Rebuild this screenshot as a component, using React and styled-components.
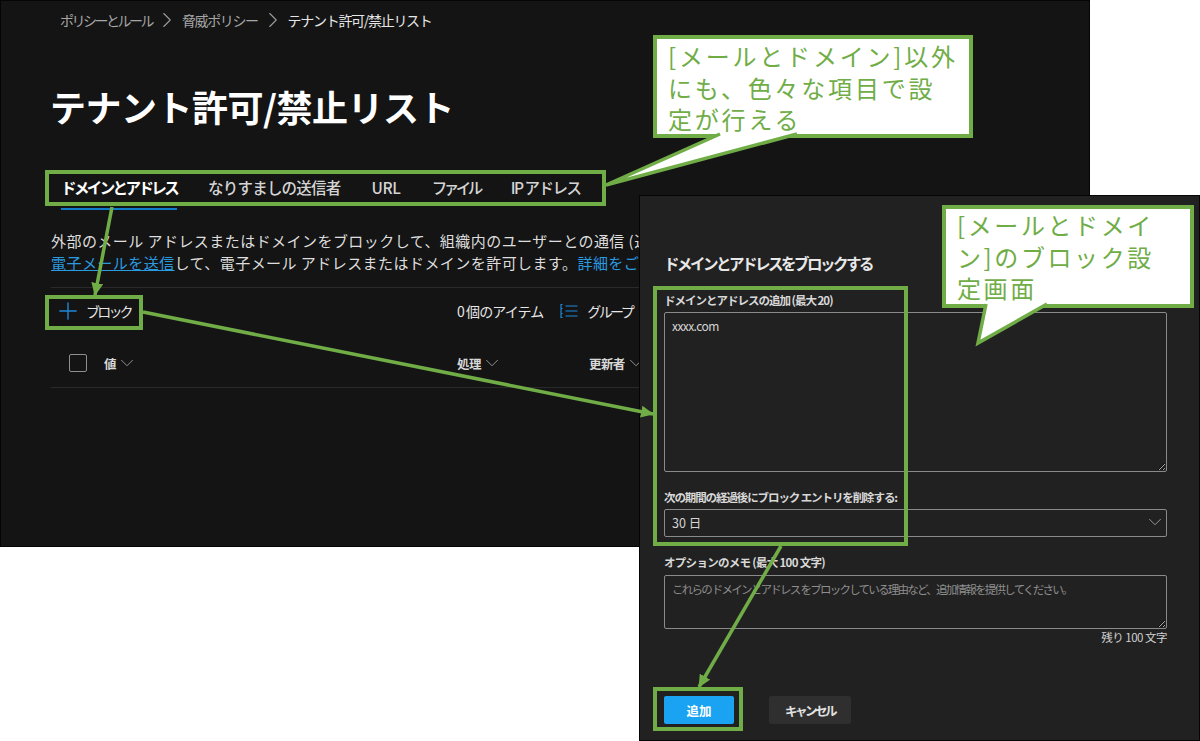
import styled, { createGlobalStyle } from "styled-components";
import { ChevronDown, ChevronRight, Plus } from "lucide-react";

const FONT = `"Noto Sans CJK JP", "Noto Sans", sans-serif`;
const GREEN = "#70ad47";

const GlobalStyle = createGlobalStyle`
  html, body {
    margin: 0;
    background: #fff;
    font-family: ${FONT};
  }
  * { box-sizing: border-box; }
`;

const Canvas = styled.div`
  position: relative;
  width: 1200px;
  height: 741px;
  overflow: hidden;
  background: #fff;
`;

/* ---- main window ---- */
const MainWindow = styled.div`
  position: absolute;
  left: 0;
  top: 0;
  width: 1090px;
  height: 547px;
  padding: 0 0 0 50px;
  background: #141414;
  border: 1px solid #050505;
  overflow: hidden;
  color: #fff;
`;

const Breadcrumb = styled.nav`
  display: flex;
  align-items: center;
  height: 20px;
  margin: 9px 0 0 9px;
  font-size: 14px;
  line-height: 20px;
  svg {
    margin: 0 2px;
    color: #9a9a9a;
  }
`;

const Crumb = styled.span`
  letter-spacing: ${(p) => p.$spacing}px;
  color: ${(p) => (p.$current ? "#e6e6e6" : "#a6a6a6")};
`;

const Title = styled.h1`
  margin: 51px 0 0 -1px;
  font-size: 36px;
  line-height: 50px;
  font-weight: 700;
  letter-spacing: -0.5px;
  white-space: nowrap;
`;

const Tabs = styled.div`
  display: flex;
  gap: 31px;
  margin: 38px 0 0 10px;
  height: 44px;
`;

const Tab = styled.div`
  height: 41px;
  padding-top: 6px;
  font-size: 15.5px;
  line-height: 24px;
  letter-spacing: ${(p) => p.$spacing}px;
  font-weight: ${(p) => (p.$active ? 700 : 500)};
  color: ${(p) => (p.$active ? "#fff" : "#d4d4d4")};
  border-bottom: 2px solid ${(p) => (p.$active ? "#0f7dcb" : "transparent")};
  white-space: nowrap;
`;

const Description = styled.div`
  width: 1020px;
  margin-top: 17px;
  font-size: 15px;
  line-height: 22px;
  letter-spacing: 0.45px;
  color: #dedede;
  white-space: nowrap;
`;

const LinkText = styled.a`
  color: #2b9be0;
  text-decoration: ${(p) => (p.$plain ? "none" : "underline")};
`;

const Toolbar = styled.div`
  display: flex;
  align-items: center;
  width: 1020px;
  height: 46px;
  margin-top: 13px;
  padding-left: 3px;
  border-top: 1px solid #2a2a2a;
  font-size: 14px;
  color: #e6e6e6;
`;

const BlockButton = styled.div`
  display: flex;
  align-items: center;
  gap: 4px;
  width: 403px;
  letter-spacing: -2.8px;
  svg {
    color: #1e88d8;
  }
`;

const ItemCount = styled.span`
  margin-right: 17px;
  letter-spacing: -0.9px;
`;

const GroupButton = styled.div`
  display: flex;
  align-items: center;
  gap: 9px;
  letter-spacing: -2.6px;
`;

const HeaderRow = styled.div`
  display: flex;
  align-items: center;
  width: 1020px;
  height: 53px;
  margin-top: 2px;
  padding: 4px 0 0 18px;
  border-bottom: 1px solid #2a2a2a;
  font-size: 12.5px;
  font-weight: 700;
  color: #d8d8d8;
`;

const Checkbox = styled.span`
  width: 18px;
  height: 18px;
  margin-right: 17px;
  border: 1px solid #8f8f8f;
  border-radius: 2px;
`;

const ColumnHead = styled.div`
  display: flex;
  align-items: center;
  gap: 0;
  width: ${(p) => p.$w}px;
  letter-spacing: -0.6px;
  svg {
    color: #9a9a9a;
  }
`;

/* ---- flyout ---- */
const Flyout = styled.div`
  position: absolute;
  left: 639px;
  top: 195px;
  width: 561px;
  height: 546px;
  display: flex;
  flex-direction: column;
  padding: 55px 32px 0 24px;
  background: #212121;
  border: 1px solid #050505;
  color: #e8e8e8;
`;

const FlyoutTitle = styled.h2`
  margin: 0 0 17px;
  font-size: 15.5px;
  line-height: 24px;
  font-weight: 700;
  letter-spacing: -2.5px;
`;

const FieldLabel = styled.label`
  display: block;
  font-size: 11.5px;
  line-height: 16px;
  font-weight: 700;
  letter-spacing: ${(p) => p.$spacing}px;
  color: #d8d8d8;
  margin: ${(p) => p.$mt || 0}px 0 ${(p) => p.$mb || 4}px;
`;

const TextArea = styled.textarea`
  display: block;
  width: 503px;
  height: ${(p) => p.$h}px;
  margin: 0;
  padding: 5px 7px;
  background: #212121;
  border: 1px solid #8a8a8a;
  border-radius: 2px;
  outline: none;
  color-scheme: dark;
  font-family: ${FONT};
  font-size: 12px;
  line-height: 16px;
  letter-spacing: -0.55px;
  color: #d4d4d4;
  resize: vertical;
  &::placeholder {
    font-size: 11.5px;
    letter-spacing: -1.75px;
    color: #8e8e8e;
    opacity: 1;
  }
`;

const Select = styled.div`
  display: flex;
  align-items: center;
  justify-content: space-between;
  width: 503px;
  height: 28px;
  padding: 0 0 2px 7px;
  border: 1px solid #8a8a8a;
  border-radius: 2px;
  font-size: 12.5px;
  color: #d4d4d4;
  svg {
    color: #a0a0a0;
  }
`;

const Counter = styled.div`
  width: 503px;
  text-align: right;
  font-size: 11.5px;
  line-height: 16px;
  letter-spacing: -0.5px;
  color: #d0d0d0;
`;

const ButtonRow = styled.div`
  display: flex;
  gap: 35px;
  margin-top: 51px;
`;

const Button = styled.div`
  display: flex;
  align-items: center;
  justify-content: center;
  width: ${(p) => p.$w}px;
  height: 28px;
  border-radius: 2px;
  font-size: 12.5px;
  font-weight: 700;
  letter-spacing: ${(p) => p.$spacing}px;
  background: ${(p) => (p.$primary ? "#1aa3f2" : "#2f2f2f")};
  color: ${(p) => (p.$primary ? "#fff" : "#e2e2e2")};
`;

/* ---- annotations placed over the screenshots ---- */
const Frame = styled.div`
  position: absolute;
  left: ${(p) => p.$x}px;
  top: ${(p) => p.$y}px;
  width: ${(p) => p.$w}px;
  height: ${(p) => p.$h}px;
  border: 4px solid ${GREEN};
`;

const Callout = styled.div`
  position: absolute;
  left: ${(p) => p.$x}px;
  top: ${(p) => p.$y}px;
  width: ${(p) => p.$w}px;
  height: 103px;
  padding: ${(p) => p.$pt}px 0 0 11px;
  background: #fff;
  border: 4px solid ${GREEN};
  font-size: 24px;
  line-height: 31.5px;
  letter-spacing: ${(p) => p.$spacing}px;
  color: ${GREEN};
  white-space: nowrap;
`;

const Overlay = styled.svg`
  position: absolute;
  left: 0;
  top: 0;
  width: 1200px;
  height: 741px;
  pointer-events: none;
`;

const GroupIcon = () => (
  <svg width="18" height="16" viewBox="0 0 18 16" fill="none" stroke="#1e88d8" strokeWidth="1.2">
    <path d="M2.5 1.5H1v4h1.5M2.5 10.5H1v4h1.5M1 5.5v5" />
    <path d="M5.5 3h12M5.5 8h12M5.5 13h12" />
  </svg>
);

const App = () => (
  <Canvas>
    <GlobalStyle />

    <MainWindow>
      <Breadcrumb>
        <Crumb $spacing={-2.5}>ポリシーとルール</Crumb>
        <ChevronRight size={26} strokeWidth={1} />
        <Crumb $spacing={-1.4}>脅威ポリシー</Crumb>
        <ChevronRight size={26} strokeWidth={1} />
        <Crumb $current $spacing={-1.3}>テナント許可/禁止リスト</Crumb>
      </Breadcrumb>
      <Title>テナント許可/禁止リスト</Title>
      <Tabs>
        <Tab $active $spacing={-2.6}>ドメインとアドレス</Tab>
        <Tab $spacing={-0.8}>なりすましの送信者</Tab>
        <Tab $spacing={-0.3}>URL</Tab>
        <Tab $spacing={-3.5}>ファイル</Tab>
        <Tab $spacing={-1.5}>IP アドレス</Tab>
      </Tabs>
      <Description>
        外部のメール アドレスまたはドメインをブロックして、組織内のユーザーとの通信 (送受信) を防止します。
        <br />
        <LinkText>電子メールを送信</LinkText>して、電子メール アドレスまたはドメインを許可します。
        <LinkText $plain>詳細をご確認ください</LinkText>
      </Description>
      <Toolbar>
        <BlockButton>
          <Plus size={28} strokeWidth={1.2} />
          ブロック
        </BlockButton>
        <ItemCount>0 個のアイテム</ItemCount>
        <GroupButton>
          <GroupIcon />
          グループ
        </GroupButton>
      </Toolbar>
      <HeaderRow>
        <Checkbox />
        <ColumnHead $w={353}>
          値 <ChevronDown size={22} strokeWidth={1} />
        </ColumnHead>
        <ColumnHead $w={132}>
          処理 <ChevronDown size={22} strokeWidth={1} />
        </ColumnHead>
        <ColumnHead $w={100}>
          更新者 <ChevronDown size={22} strokeWidth={1} />
        </ColumnHead>
      </HeaderRow>
    </MainWindow>

    <Flyout>
      <FlyoutTitle>ドメインとアドレスをブロックする</FlyoutTitle>
      <FieldLabel $spacing={-1}>ドメインとアドレスの追加 (最大 20)</FieldLabel>
      <TextArea $h={160} defaultValue="xxxx.com" />
      <FieldLabel $mt={17} $spacing={-1.1}>次の期間の経過後にブロック エントリを削除する:</FieldLabel>
      <Select>
        30 日
        <ChevronDown size={22} strokeWidth={1} />
      </Select>
      <FieldLabel $mt={17} $mb={5} $spacing={-0.7}>オプションのメモ (最大 100 文字)</FieldLabel>
      <TextArea $h={54} placeholder="これらの ドメインとアドレス をブロックしている理由など、追加情報を提供してください。" />
      <Counter>残り 100 文字</Counter>
      <ButtonRow>
        <Button $primary $w={70} $spacing={0}>追加</Button>
        <Button $w={82} $spacing={-2.5}>キャンセル</Button>
      </ButtonRow>
    </Flyout>

    <Frame $x={45} $y={170} $w={561} $h={36} />
    <Frame $x={45} $y={295} $w={98} $h={35} />
    <Frame $x={653} $y={286} $w={255} $h={260} />
    <Frame $x={653} $y={687} $w={90} $h={44} />

    <Callout $x={653} $y={35} $w={320} $spacing={2.8} $pt={1}>
      [メールとドメイン]以外
      <br />
      にも、色々な項目で設
      <br />
      定が行える
    </Callout>
    <Callout $x={942} $y={205} $w={252} $spacing={2.6} $pt={0}>
      [メールとドメイ
      <br />
      ン]のブロック設
      <br />
      定画面
    </Callout>

    <Overlay viewBox="0 0 1200 741">
      <defs>
        <marker id="head" markerUnits="userSpaceOnUse" markerWidth="14" markerHeight="12" refX="12" refY="6" orient="auto">
          <path d="M0 0 L13 6 L0 12 Z" fill={GREEN} />
        </marker>
      </defs>
      <path d="M720 134 L606 185 L797 134" fill="#fff" stroke={GREEN} strokeWidth="3.5" />
      <path d="M986 304 L978 343 L1047 304" fill="#fff" stroke={GREEN} strokeWidth="3.5" />
      <line x1="112" y1="207" x2="95" y2="295" stroke={GREEN} strokeWidth="3.5" markerEnd="url(#head)" />
      <line x1="143" y1="312" x2="653" y2="414" stroke={GREEN} strokeWidth="3.5" markerEnd="url(#head)" />
      <line x1="781" y1="546" x2="699" y2="687" stroke={GREEN} strokeWidth="3.5" markerEnd="url(#head)" />
    </Overlay>
  </Canvas>
);

export default App;
